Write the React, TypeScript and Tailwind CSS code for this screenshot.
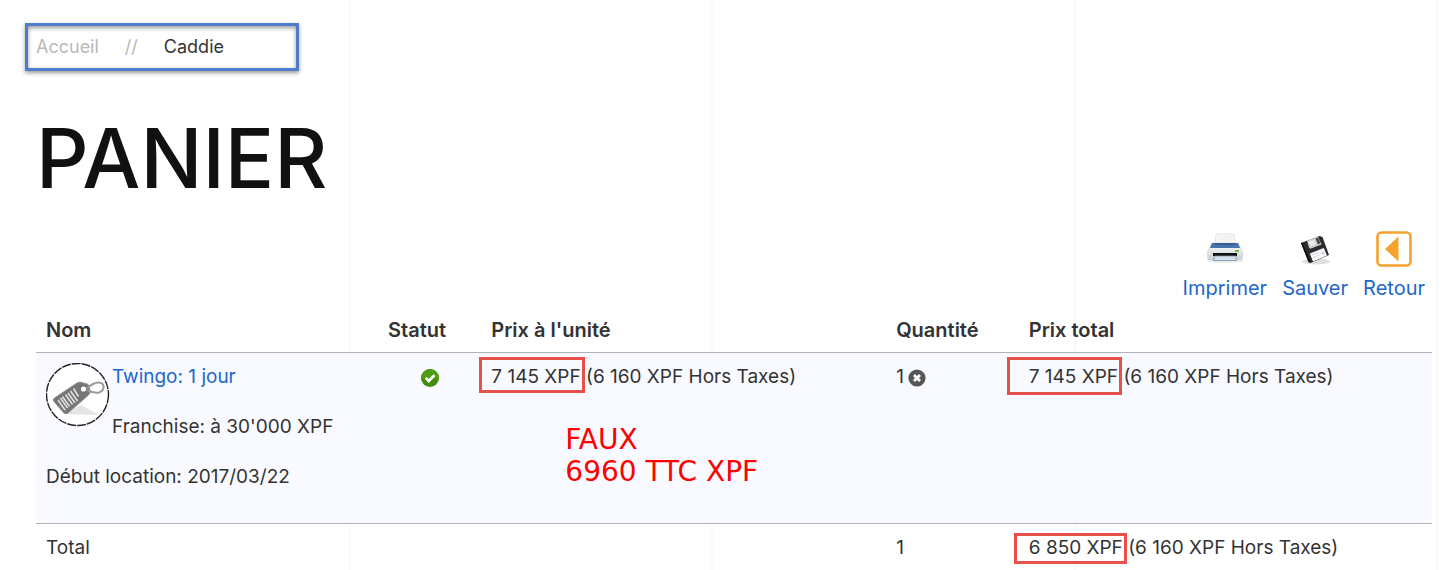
import type { ReactNode } from "react";
import clsx from "clsx";

type Action = {
  label: string;
  icon: ReactNode;
};

const actions: Action[] = [
  { label: "Imprimer", icon: <PrinterIcon /> },
  { label: "Sauver", icon: <FloppyIcon /> },
  { label: "Retour", icon: <BackIcon /> },
];

export default function App() {
  return (
    <div className="relative overflow-hidden bg-white font-[Inter,'Noto_Sans',sans-serif] text-[19px] leading-7 text-[#333]">
      {/* Faint column guides behind the page */}
      <div aria-hidden="true" className="absolute inset-y-0 -left-3 right-0.5 grid grid-cols-4">
        {[1, 2, 3, 4].map((col) => (
          <div key={col} className="border-r-2 border-[#fafafa]" />
        ))}
      </div>

      <div className="relative pt-[23px] pr-2 pl-9">
        <nav
          aria-label="Fil d'Ariane"
          className="-ml-[11px] w-[274px] border-3 border-[#4f7dcb] px-2 py-[7px] text-lg leading-7 shadow-[0_2px_4px_rgba(0,0,0,0.4),inset_0_2px_4px_rgba(0,0,0,0.4)]"
        >
          <ol className="flex gap-[26px]">
            <li>
              <a href="#" className="text-[#b8b8b8]">Accueil</a>
            </li>
            <li aria-hidden="true" className="text-[#b8b8b8]">//</li>
            <li aria-current="page">Caddie</li>
          </ol>
        </nav>

        <h1 className="mt-12 text-[82px] leading-20 font-medium text-[#111]">PANIER</h1>

        <div className="mt-8 flex justify-end gap-[15px] pr-[7px] text-xl leading-7">
          {actions.map((action) => (
            <a key={action.label} href="#" className="flex flex-col items-center gap-[7px] text-[#2266cc]">
              {action.icon}
              {action.label}
            </a>
          ))}
        </div>

        <CartTable />
      </div>
    </div>
  );
}

function CartTable() {
  return (
    <table className="w-full table-fixed border-collapse text-left">
      <colgroup>
        <col className="w-[24.5%]" />
        <col className="w-[7.4%]" />
        <col className="w-[29%]" />
        <col className="w-[9.5%]" />
        <col />
      </colgroup>
      <thead>
        <tr className="border-b border-[#b3b3b3]">
          {["Nom", "Statut", "Prix à l'unité", "Quantité", "Prix total"].map((title) => (
            <th key={title} scope="col" className="px-2.5 pt-3.5 pb-2 text-xl leading-7 font-semibold">
              {title}
            </th>
          ))}
        </tr>
      </thead>
      <tbody>
        <tr className="border-b border-[#b3b3b3] bg-[#f9faff] align-top">
          <td className="px-2.5 pt-2.5 pb-8">
            <div className="flex gap-0.5">
              <TagIcon />
              <div className="whitespace-nowrap">
                <a href="#" className="text-[#2266cc]">Twingo: 1 jour</a>
                <p className="mt-5.5">Franchise: à 30'000 XPF</p>
              </div>
            </div>
            <p className="mt-5.5 whitespace-nowrap">Début location: 2017/03/22</p>
          </td>
          <td className="px-2.5 pt-2.5">
            <div className="flex h-7 items-center justify-center">
              <CheckIcon />
            </div>
          </td>
          <td className="relative px-2.5 pt-2.5">
            <Price amount="7 145 XPF" net="6 160 XPF" frame="-left-3 -top-1.5 -bottom-0.5" />
            <p className="absolute top-[71px] left-[84px] font-['DejaVu_Sans',sans-serif] text-[28px] leading-8 whitespace-nowrap text-[#ff0000]">
              FAUX
              <br />
              6960 TTC XPF
            </p>
          </td>
          <td className="px-2.5 pt-2.5">
            <div className="flex items-center gap-1">
              1
              <button type="button" aria-label="Supprimer l'article">
                <RemoveIcon />
              </button>
            </div>
          </td>
          <td className="px-2.5 pt-2.5">
            <Price amount="7 145 XPF" net="6 160 XPF" frame="-left-[22px] -top-1.5 -bottom-1" />
          </td>
        </tr>
      </tbody>
      <tfoot>
        <tr className="align-top">
          <th scope="row" className="px-2.5 pt-2.5 pb-2 font-normal">Total</th>
          <td />
          <td />
          <td className="px-2.5 pt-2.5">1</td>
          <td className="px-2.5 pt-2.5">
            <Price amount="6 850 XPF" net="6 160 XPF" frame="-left-[15px] -top-px -bottom-0.5" />
          </td>
        </tr>
      </tfoot>
    </table>
  );
}

// Amount with a red frame round it, then the price without tax
function Price({ amount, net, frame }: { amount: string; net: string; frame: string }) {
  return (
    <div className="whitespace-nowrap">
      <span className="relative inline-block">
        {amount}
        <span aria-hidden="true" className={clsx("absolute -right-1 border-3 border-[#e94f4b]", frame)} />
      </span>{" "}
      ({net} Hors Taxes)
    </div>
  );
}

function PrinterIcon() {
  return (
    <svg viewBox="0 0 38 36" className="h-9 w-[38px]" aria-hidden="true">
      <defs>
        <linearGradient id="printer-body" x1="0" y1="0" x2="0" y2="1">
          <stop offset="0" stopColor="#ffffff" />
          <stop offset="1" stopColor="#c9cbcd" />
        </linearGradient>
      </defs>
      <ellipse cx="19" cy="30" rx="18" ry="2" fill="#ececec" />
      <path d="M10 3h18l1 11H9z" fill="#f7f7f7" stroke="#dcdcdc" strokeWidth=".8" />
      <path d="M12 6h14M12 9h14" stroke="#e6e6e6" strokeWidth=".8" />
      <path d="M6 12h26l2 4 2.500 4v7q0 2-2 2H3.500q-2 0-2-2v-7L4 16z" fill="url(#printer-body)" stroke="#cfd1d4" strokeWidth=".6" />
      <path d="M6 12h26l2 5H4z" fill="#4773ad" />
      <path d="M9 12h20v2H9z" fill="#365f96" />
      <path d="M29 19h4v2h-4z" fill="#67c43b" />
      <path d="M7 22h24v3H7z" fill="#111" />
      <path d="M8.500 25h21l1 4.500h-23z" fill="#d5e1ea" stroke="#7891a8" strokeWidth=".8" />
    </svg>
  );
}

function FloppyIcon() {
  return (
    <svg viewBox="0 0 36 36" className="size-9" aria-hidden="true">
      <ellipse cx="19" cy="30.500" rx="14" ry="3" fill="#dedede" />
      <path d="M4 12 22.500 5l3 1L32 24 13.500 32l-2-1z" fill="#2c2c2c" />
      <path d="m4 12 1.500-.5L14 31.800l-2.500-.8z" fill="#111" />
      <path d="M10 9.700 21 5.500l3.500 8-10.500 4q-1.500.3-2-1z" fill="#cfcfcf" />
      <path d="m18.500 7.500 2.600-1 2.400 5.800-2.600 1z" fill="#444" />
      <path d="m11.500 11 5.500-2 1.500 4-5 2z" fill="#ececec" />
      <path d="m12.800 22.500 14-5.500 3.200 7.500-14 6z" fill="#fafafa" />
      <path d="m15 24 7-2.800M16 26.500l6-2.400" stroke="#cfcfcf" strokeWidth=".8" />
      <circle cx="26" cy="22" r="1.600" fill="#bcd5f5" />
    </svg>
  );
}

function BackIcon() {
  return (
    <svg viewBox="0 0 36 36" className="size-9" aria-hidden="true">
      <rect x="1.500" y="1.500" width="33" height="33" rx="4" fill="#fff" stroke="#f6a22d" strokeWidth="2.600" />
      <path d="M22.500 5.500V30.500L9 18z" fill="#f6a22d" />
    </svg>
  );
}

function TagIcon() {
  return (
    <svg viewBox="0 0 64 64" className="size-16 shrink-0" aria-hidden="true">
      <circle cx="31.500" cy="31.500" r="31" fill="#fff" stroke="#222" strokeWidth="1.400" strokeDasharray="9 1" />
      <path d="M16 51 35 42 53 52z" fill="#e4e4e4" />
      <path
        d="M8.500 35 31 20q2-1 4-.6l6 1.600q2 .5 2.300 2.500l.7 5q.2 2-1.500 3.500L22 50q-2.500 1.800-4.500-.5l-9.500-11q-1.500-2 .5-3.500z"
        fill="#767676"
        stroke="#8c8c8c"
      />
      <path
        d="m12 37 7 10m-4.500-12 7 10m-5-11.500 7 10m-4-12 7 10m-4.500-11.500 7 10m-4.500-12 7 10m-4-12.500 5 8"
        stroke="#e2e2e2"
        strokeWidth="1.500"
      />
      <circle cx="37.500" cy="26" r="2.600" fill="#fff" />
      <path
        d="M41 27c3 1.500 7 3.500 12 2.500 4-1 5.500-5 4-8-1.500-2.500-6-2.500-10-.5-2 1-4 2.500-6 4.500"
        fill="none"
        stroke="#9a9a9a"
        strokeWidth="2"
      />
    </svg>
  );
}

function CheckIcon() {
  return (
    <svg viewBox="0 0 20 20" className="size-5" role="img" aria-label="Disponible">
      <circle cx="10" cy="11" r="9" fill="#418c0c" />
      <path d="M1 11a9 9 0 0 1 18 0q-9 3-18 0z" fill="#4f9d12" />
      <path d="m5.800 10.800 3 3.200 5.700-5.800" fill="none" stroke="#fff" strokeWidth="2.600" />
    </svg>
  );
}

function RemoveIcon() {
  return (
    <svg viewBox="0 0 18 18" className="mt-0.5 size-[18px]" aria-hidden="true">
      <circle cx="9" cy="9" r="8.600" fill="#555" />
      <path d="m6 6 6 6m0-6-6 6" stroke="#fff" strokeWidth="2.800" />
    </svg>
  );
}
